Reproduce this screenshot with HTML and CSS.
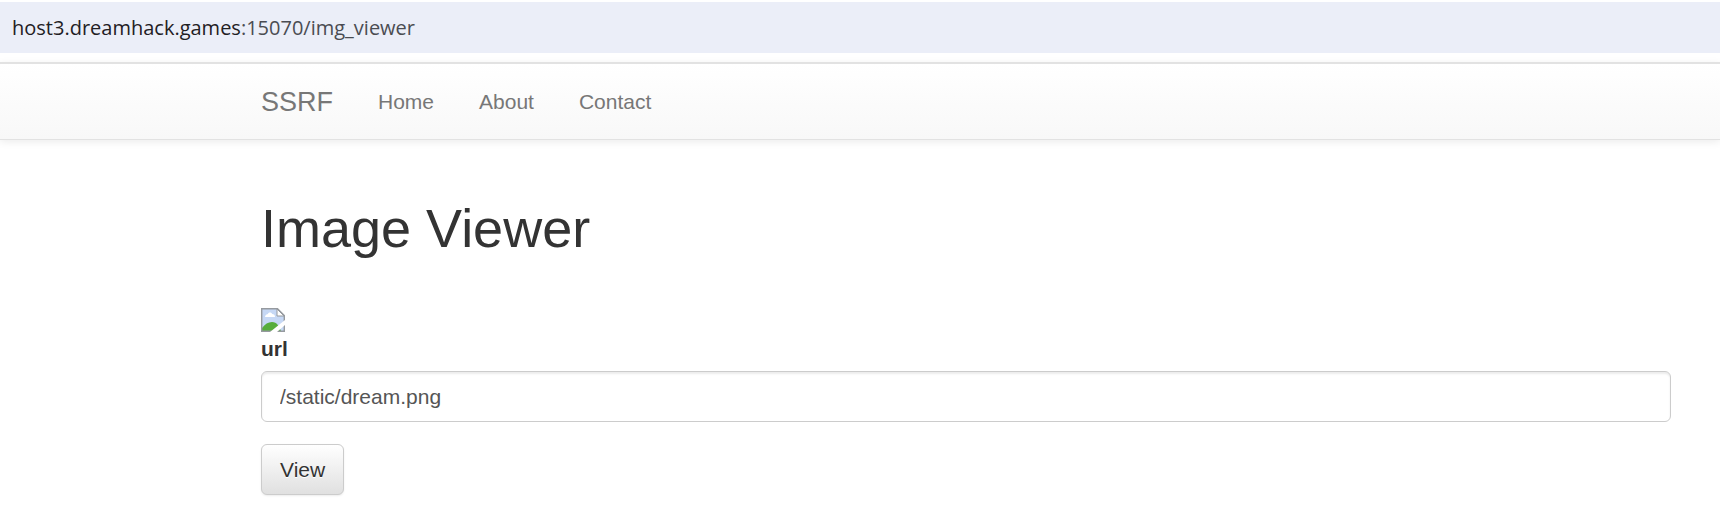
FILE: index.html
```html
<!doctype html>
<html lang="en">

<head>
    <meta charset="utf-8">
    <meta name="viewport" content="width=device-width, initial-scale=1">
    <title>Image Viewer SSRF</title>
    <link rel="stylesheet" href="styles.css">
</head>

<body>

    <div class="address-bar">host3.dreamhack.games<span class="address-path">:15070/img_viewer</span></div>

    <nav class="navbar">
        <a class="navbar-brand" href="#">SSRF</a>
        <ul class="navbar-nav">
            <li><a href="#">Home</a></li>
            <li><a href="#about">About</a></li>
            <li><a href="#contact">Contact</a></li>
        </ul>
    </nav>

    <main class="container">
        <h1>Image Viewer</h1>

        <!-- broken image -->
        <svg class="broken-image" viewBox="0 0 24 24" role="img" aria-label="broken image">
            <path d="M1 1h15l7 7v15H1z" fill="#c6d8f5" />
            <path d="M4 9c0-2 2-3 3-3 0-2 4-2 4 0 2 0 3 1 3 3z" fill="#fff" />
            <path d="M1 23v-3c3-4 6-6 10-6 5 0 7 4 9 9z" fill="#56ad3c" />
            <path d="M.7.7h15.8l6.8 6.8v15.8H.7z" fill="none" stroke="#969a9f" stroke-width="1.4" />
            <path d="M16 1v7h7z" fill="#fff" stroke="#969a9f" />
            <path d="M9 24L24 12v5l-8 7z" fill="#fff" />
        </svg>

        <form>
            <label for="url">url</label>
            <input class="form-control" type="text" id="url" name="url" value="/static/dream.png">
            <button class="btn" type="submit">View</button>
        </form>
    </main>

</body>

</html>
```
FILE: styles.css
```css
* {
    box-sizing: border-box;
}

body {
    font-family: "Liberation Sans", Arial, Helvetica, sans-serif;
    font-size: 21px;
    line-height: 30px;
    margin: 0;
    padding-top: 2px;
    color: #333;
    background-color: #fff;
}

.address-bar {
    font-family: "Open Sans", "Noto Sans", sans-serif;
    font-size: 20px;
    line-height: 51px;
    margin-bottom: 9px;
    padding-left: 12px;
    color: #1f2024;
    background-color: #ebeef8;
}

.address-path {
    color: #4a4c52;
}

.navbar {
    display: flex;
    align-items: center;
    height: 78px;
    padding-left: 261px;
    border-top: 2px solid #e2e2e2;
    border-bottom: 1px solid #e2e2e2;
    background-image: linear-gradient(#fff, #f8f8f8);
    box-shadow: 0 2px 8px rgba(0, 0, 0, .08);
}

.navbar a {
    color: #777;
    text-decoration: none;
}

.navbar a:hover {
    color: #333;
}

.navbar-brand {
    font-size: 27px;
}

.navbar-nav {
    display: flex;
    gap: 45px;
    list-style: none;
    margin: 0 0 0 45px;
    padding: 0;
}

.container {
    padding: 58px 49px 30px 261px;
}

h1 {
    font-size: 54px;
    font-weight: 500;
    line-height: 60px;
    margin: 0 0 50px;
}

.broken-image {
    display: block;
    width: 24px;
    height: 24px;
    margin-bottom: 2px;
}

label {
    display: block;
    font-weight: bold;
    margin-bottom: 7px;
}

.form-control {
    display: block;
    width: 100%;
    height: 51px;
    margin-bottom: 22px;
    padding: 9px 18px;
    font-family: inherit;
    font-size: 21px;
    color: #555;
    background-color: #fff;
    border: 1px solid #ccc;
    border-radius: 6px;
    box-shadow: inset 0 2px 2px rgba(0, 0, 0, .08);
}

.btn {
    height: 51px;
    padding: 0 18px;
    font-family: inherit;
    font-size: 21px;
    color: #333;
    text-shadow: 0 1px 0 #fff;
    background-image: linear-gradient(#fff, #e0e0e0);
    border: 1px solid #ccc;
    border-radius: 6px;
    box-shadow: 0 1px 2px rgba(0, 0, 0, .08);
    cursor: pointer;
}
```
